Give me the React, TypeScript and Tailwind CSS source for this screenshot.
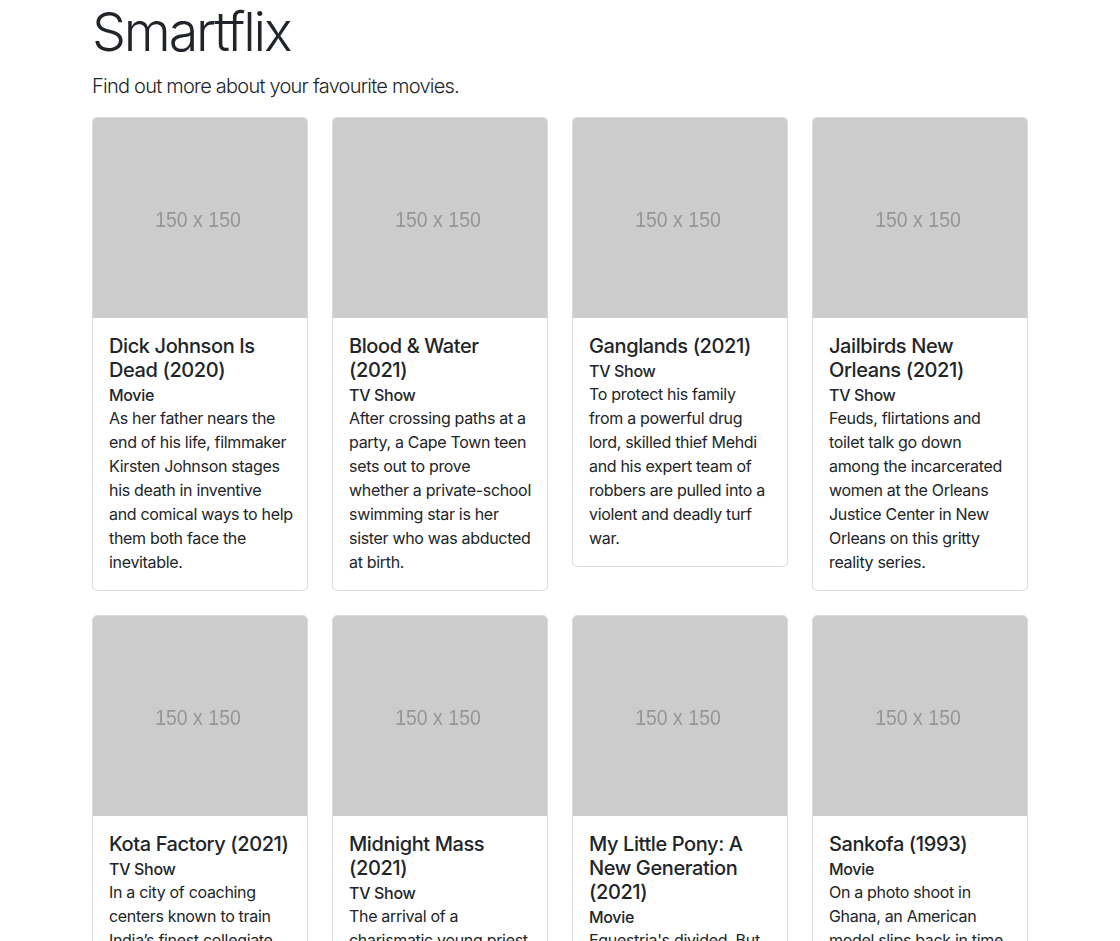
import type { ReactNode } from "react";

const shows: { title: string; type: string; description: ReactNode }[] = [
  {
    title: "Dick Johnson Is Dead (2020)",
    type: "Movie",
    description: (
      <>
        As her father nears the end of his life, filmmaker Kirsten Johnson stages his death in inventive{" "}
        <span className="whitespace-nowrap">and comical ways to help</span> them both face the inevitable.
      </>
    ),
  },
  {
    title: "Blood & Water (2021)",
    type: "TV Show",
    description:
      "After crossing paths at a party, a Cape Town teen sets out to prove whether a private-school swimming star is her sister who was abducted at birth.",
  },
  {
    title: "Ganglands (2021)",
    type: "TV Show",
    description:
      "To protect his family from a powerful drug lord, skilled thief Mehdi and his expert team of robbers are pulled into a violent and deadly turf war.",
  },
  {
    title: "Jailbirds New Orleans (2021)",
    type: "TV Show",
    description:
      "Feuds, flirtations and toilet talk go down among the incarcerated women at the Orleans Justice Center in New Orleans on this gritty reality series.",
  },
  {
    title: "Kota Factory (2021)",
    type: "TV Show",
    description:
      "In a city of coaching centers known to train India\u2019s finest collegiate minds, an earnest but unexceptional student and his friends navigate campus life.",
  },
  {
    title: "Midnight Mass (2021)",
    type: "TV Show",
    description:
      "The arrival of a charismatic young priest brings glorious miracles, ominous mysteries and renewed religious fervor to a dying town desperate to believe.",
  },
  {
    title: "My Little Pony: A New Generation (2021)",
    type: "Movie",
    description:
      "Equestria's divided. But a bright-eyed hero believes Earth Ponies, Pegasi and Unicorns should be pals \u2014 and, hoof to heart, she\u2019s determined to prove it.",
  },
  {
    title: "Sankofa (1993)",
    type: "Movie",
    description:
      "On a photo shoot in Ghana, an American model slips back in time, becomes enslaved on a plantation and bears witness to the agony of her ancestral past.",
  },
];

function ShowCard({ title, type, description }: { title: string; type: string; description: ReactNode }) {
  return (
    <div className="flex flex-col border border-[#dadbdc] rounded-[5px] bg-white overflow-hidden">
      <div className="h-[200px] bg-[#cccccc] flex items-center justify-center">
        <span className="font-['Liberation_Sans',Arial,sans-serif] text-[19.5px] text-[#959595] blur-[0.4px] scale-y-110 -translate-x-[2px] translate-y-[2px]">
          150 x 150
        </span>
      </div>
      <div className="p-4">
        <h5 className="text-[20px] font-medium leading-[1.2] tracking-[-0.02em] mb-2">{title}</h5>
        <h6 className="text-base font-medium leading-[1.2] tracking-[-0.02em] -mt-1">{type}</h6>
        <p className="text-base leading-6 tracking-[-0.02em] pt-px">{description}</p>
      </div>
    </div>
  );
}

export default function App() {
  return (
    <div className="min-h-screen bg-white text-[#212529] font-['Inter','Noto_Sans',sans-serif]">
      <div className="max-w-[960px] mx-auto px-3">
        <h1 className="text-[53.84px] font-light leading-[1.2] tracking-[-0.04em] mb-[6px]">Smartflix</h1>
        <p className="text-xl font-light leading-[1.5] tracking-[-0.038em] mb-4">
          Find out more about your favourite movies.
        </p>
        <div className="grid grid-cols-4 gap-x-6 gap-y-6 items-start">
          {shows.map((show) => (
            <ShowCard key={show.title} {...show} />
          ))}
        </div>
      </div>
    </div>
  );
}
